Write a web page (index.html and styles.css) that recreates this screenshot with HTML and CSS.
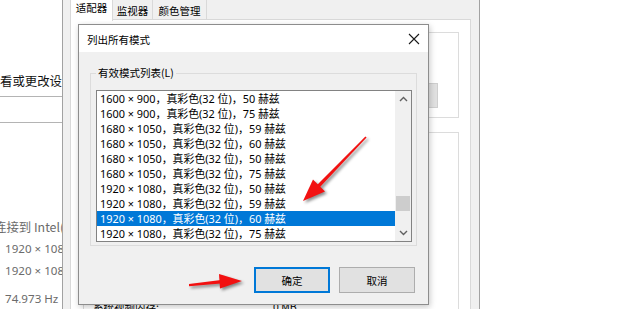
FILE: index.html
```html
<!DOCTYPE html>
<html lang="zh-CN">
<head>
<meta charset="utf-8">
<title>列出所有模式</title>
<link rel="stylesheet" href="styles.css">
</head>
<body>
<div class="screen">
  <aside class="settings">
    <p class="settings-link">看或更改设置</p>
    <div class="rule"></div>
    <div class="rule rule-second"></div>
    <div class="settings-info">
      <p class="conn">连接到 Intel(R)</p>
      <p>1920 × 1080</p>
      <p>1920 × 1080</p>
      <p class="hz">74.973 Hz</p>
    </div>
  </aside>

  <section class="props">
    <nav class="tabs">
      <span class="tab active">适配器</span>
      <span class="tab">监视器</span>
      <span class="tab">颜色管理</span>
    </nav>
    <div class="panel">
      <div class="group group-type">
        <div class="prop-btn"></div>
      </div>
      <div class="group group-info">
        <div class="info-row"><span>系统视频内存:</span><span>0 MB</span></div>
      </div>
    </div>
  </section>

  <section class="dialog">
    <header class="titlebar">
      <span class="title">列出所有模式</span>
      <svg class="close" width="12" height="12" viewBox="0 0 12 12"><path d="M1 1 L11 11 M11 1 L1 11" stroke="#1a1a1a" stroke-width="1.1" fill="none"/></svg>
    </header>
    <div class="dlg-body">
      <div class="modes-group">
        <span class="legend">有效模式列表(L)</span>
        <div class="listbox">
          <ul class="rows">
            <li>1600 × 900，真彩色(32 位)，50 赫兹</li>
            <li>1600 × 900，真彩色(32 位)，75 赫兹</li>
            <li>1680 × 1050，真彩色(32 位)，59 赫兹</li>
            <li>1680 × 1050，真彩色(32 位)，60 赫兹</li>
            <li>1680 × 1050，真彩色(32 位)，50 赫兹</li>
            <li>1680 × 1050，真彩色(32 位)，75 赫兹</li>
            <li>1920 × 1080，真彩色(32 位)，50 赫兹</li>
            <li>1920 × 1080，真彩色(32 位)，59 赫兹</li>
            <li class="selected">1920 × 1080，真彩色(32 位)，60 赫兹</li>
            <li>1920 × 1080，真彩色(32 位)，75 赫兹</li>
          </ul>
          <div class="scrollbar">
            <div class="sb-btn"><svg width="9" height="6" viewBox="0 0 9 6"><path d="M1 5 L4.5 1.5 L8 5" stroke="#606060" stroke-width="1.4" fill="none"/></svg></div>
            <div class="sb-track"><div class="sb-thumb"></div></div>
            <div class="sb-btn"><svg width="9" height="6" viewBox="0 0 9 6"><path d="M1 1 L4.5 4.5 L8 1" stroke="#606060" stroke-width="1.4" fill="none"/></svg></div>
          </div>
        </div>
      </div>
      <footer class="dlg-buttons">
        <button class="btn default">确定</button>
        <button class="btn">取消</button>
      </footer>
    </div>
  </section>

  <svg class="arrows" width="620" height="309" viewBox="0 0 620 309">
    <g class="arrow">
      <polygon points="366.6,137.6 365.4,136.4 316.8,185.2 319.6,187.4"/>
      <polygon points="303,201 325,191.5 313,179.5"/>
    </g>
    <g class="arrow">
      <polygon points="189,284 189,286.2 221,283.4 221,280"/>
      <polygon points="242,281 219,274 220,288.5"/>
    </g>
  </svg>
</div>
</body>
</html>
```

FILE: styles.css
```css
* { box-sizing: border-box; }
html, body { margin: 0; padding: 0; }
body { background: #fff; font-family: "Noto Sans", "Noto Sans CJK SC", sans-serif; }
p { margin: 0; }
ul { margin: 0; padding: 0; list-style: none; }

.screen {
  position: relative;
  width: 620px;
  height: 309px;
  overflow: hidden;
  background: #fff;
}

/* background settings app */
.settings {
  width: 62px;
  height: 309px;
  overflow: hidden;
  background: #fff;
  padding-top: 72px;
}
.settings-link {
  font-family: "Noto Sans CJK SC", sans-serif;
  font-size: 12.4px;
  line-height: 18px;
  color: #111;
  white-space: nowrap;
}
.rule { height: 1px; background: #b4b4b4; margin-top: 6px; width: 62px; }
.rule-second { margin-top: 25px; }
.settings-info {
  margin-top: 93px;
  color: #6b6b6b;
  font-size: 11.6px;
  white-space: nowrap;
}
.settings-info p { line-height: 22px; padding-left: 5px; }
.settings-info .conn { margin-left: -11px; font-family: "Noto Sans CJK SC", sans-serif; font-size: 12.4px; }
.settings-info .hz { margin-top: 6px; }

/* properties window */
.props {
  position: absolute;
  left: 62px;
  top: -4px;
  width: 418px;
  height: 330px;
  background: #f0f0f0;
  border-left: 1px solid #a2a2a2;
  border-right: 1px solid #a2a2a2;
  padding: 0 8px 0 7px;
  display: flex;
  flex-direction: column;
}
.tabs {
  display: flex;
  height: 24px;
  font-family: "Noto Sans CJK SC", sans-serif;
  font-size: 10.5px;
  color: #000;
}
.tab {
  display: flex;
  align-items: center;
  justify-content: center;
  height: 22px;
  margin-top: 2px;
  border: 1px solid #d9d9d9;
  border-left: none;
  border-bottom: none;
  padding-top: 1px;
}
.tab:nth-child(2) { width: 40px; }
.tab:nth-child(3) { width: 54px; }
.tab.active {
  width: 43px;
  height: 25px;
  margin-top: 0;
  background: #fff;
  border-left: 1px solid #d9d9d9;
  position: relative;
  z-index: 1;
  padding-top: 0;
  padding-bottom: 3px;
}
.panel {
  flex: 1;
  background: #fff;
  border: 1px solid #d9d9d9;
  margin-top: -1px;
  padding: 12px 11px 0 12px;
  display: flex;
  flex-direction: column;
  gap: 14px;
}
.group { border: 1px solid #dcdcdc; }
.group-type {
  height: 86px;
  display: flex;
  justify-content: flex-end;
  align-items: flex-start;
  padding: 50px 20px 0 0;
}
.prop-btn {
  width: 78px;
  height: 25px;
  background: #e1e1e1;
  border: 1px solid #cfcfcf;
}
.group-info {
  flex: 1;
  padding: 164px 0 0 9px;
  font-family: "Noto Sans CJK SC", sans-serif;
  font-size: 10.5px;
  color: #000;
}
.info-row { display: flex; height: 19px; align-items: center; }
.info-row span:first-child { width: 180px; }

/* dialog */
.dialog {
  position: absolute;
  left: 78px;
  top: 24px;
  width: 351px;
  height: 281px;
  border: 1px solid #8d8d8d;
  background: #f0f0f0;
  box-shadow: 1px 2px 6px rgba(0,0,0,0.22);
  display: flex;
  flex-direction: column;
  font-family: "Noto Sans CJK SC", sans-serif;
  font-size: 10.5px;
  color: #000;
}
.titlebar {
  height: 27px;
  background: #fff;
  display: flex;
  align-items: center;
  justify-content: space-between;
  padding: 0 8px 0 8px;
}
.title { padding-top: 1px; }
.dlg-body {
  flex: 1;
  padding: 21px 11px 0 11px;
  display: flex;
  flex-direction: column;
}
.modes-group {
  position: relative;
  width: 327px;
  height: 173px;
  border: 1px solid #dcdcdc;
  padding: 16px 4px 3px 5px;
}
.legend {
  position: absolute;
  left: 5px;
  top: -9px;
  background: #f0f0f0;
  padding: 0 2px;
  line-height: 16px;
}
.listbox {
  height: 152px;
  border: 1px solid #828282;
  background: #fff;
  display: flex;
}
.rows {
  flex: 1;
  font-family: "Noto Sans", "Noto Sans CJK SC", sans-serif;
  font-size: 10.9px;
  color: #000;
}
.rows li {
  height: 15px;
  line-height: 15px;
  padding-left: 3px;
  white-space: nowrap;
}
.rows li.selected { background: #0078d7; color: #fff; }
.scrollbar {
  width: 16px;
  background: #f0f0f0;
  display: flex;
  flex-direction: column;
}
.sb-btn {
  height: 16px;
  display: flex;
  align-items: center;
  justify-content: center;
}
.sb-track {
  flex: 1;
  display: flex;
  flex-direction: column;
  justify-content: flex-end;
  padding: 0 1px 14px 1px;
}
.sb-thumb { height: 15px; background: #cdcdcd; }

.dlg-buttons {
  display: flex;
  justify-content: flex-end;
  gap: 9px;
  margin-top: 21px;
  padding-right: 2px;
}
.btn {
  width: 76px;
  height: 26px;
  background: #e1e1e1;
  border: 1px solid #adadad;
  font-family: "Noto Sans CJK SC", sans-serif;
  font-size: 10.5px;
  color: #000;
  padding: 0;
}
.btn.default { border: 2px solid #0078d7; }

/* annotation arrows */
.arrows {
  position: absolute;
  left: 0;
  top: 0;
  pointer-events: none;
}
.arrow {
  fill: #f21111;
  filter: drop-shadow(2px 2px 1.5px rgba(0,0,0,0.45));
}
```
